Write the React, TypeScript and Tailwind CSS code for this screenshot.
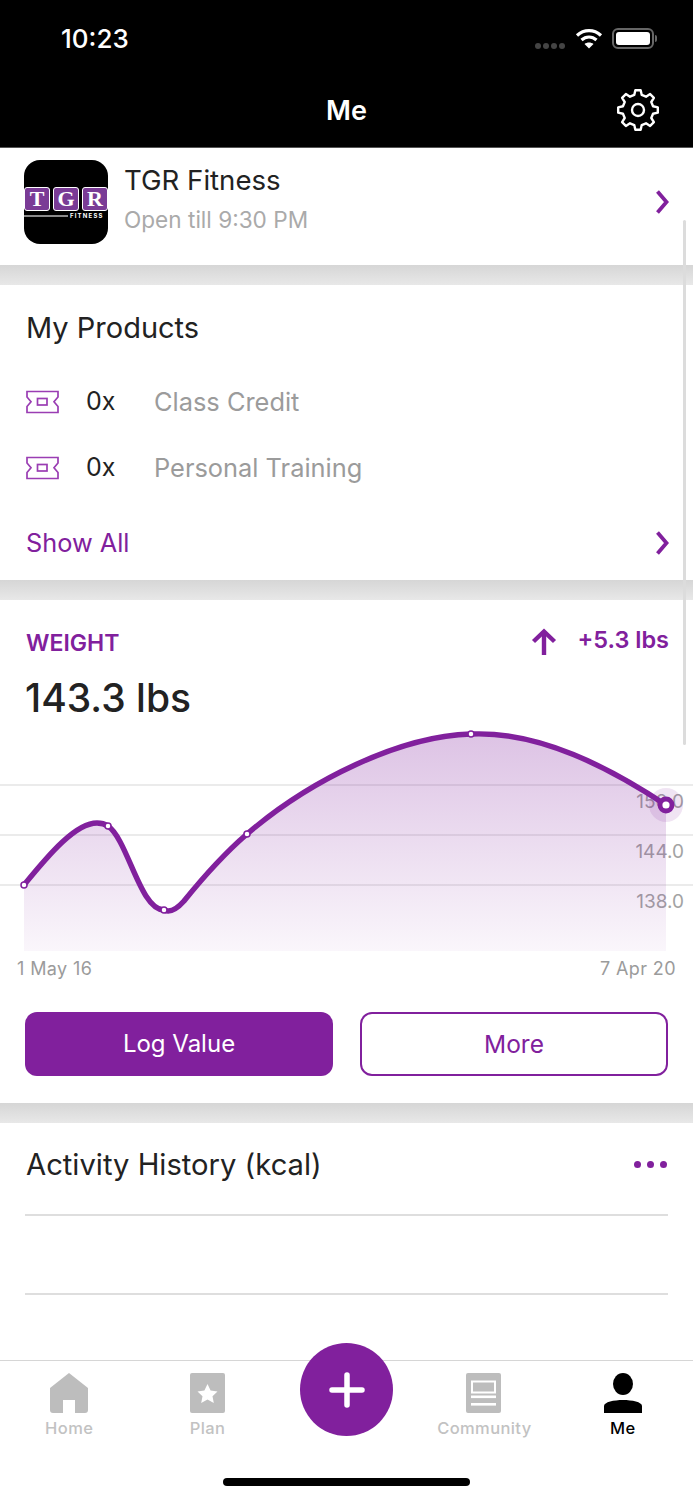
import React from "react";

const P = "#81209d";

function gearPath() {
  const cx = 22, cy = 22, n = 8;
  const pts: string[] = [];
  const ro = 20, ri = 15.5;
  for (let i = 0; i < n; i++) {
    const a = (i * 2 * Math.PI) / n - Math.PI / 2;
    const w = Math.PI / n;
    const list: [number, number][] = [
      [ri, a - w * 0.62],
      [ro, a - w * 0.34],
      [ro, a + w * 0.34],
      [ri, a + w * 0.62],
    ];
    for (const [r, t] of list) {
      pts.push(`${(cx + r * Math.cos(t)).toFixed(2)} ${(cy + r * Math.sin(t)).toFixed(2)}`);
    }
  }
  return "M" + pts.join("L") + "Z";
}

function Chevron() {
  return (
    <svg width="15" height="24" viewBox="0 0 15 24" fill="none" stroke={P} strokeWidth="3.8">
      <path d="M2.5 1.5 L11.5 12 L2.5 22.5" />
    </svg>
  );
}

function Ticket() {
  return (
    <svg width="33" height="24" viewBox="0 0 33 24" fill="none" stroke="#9a3db3" strokeWidth="1.7" className="shrink-0">
      <path d="M1 1.5 H32 V7 L28 11.8 L32 16.5 V22.5 H1 V16.5 L5 11.8 L1 7 Z" />
      <rect x="11.5" y="8.5" width="9.5" height="6.5" />
    </svg>
  );
}

function Divider() {
  return <div className="h-5 shrink-0 bg-gradient-to-b from-[#d6d6d6] to-[#e8e8e8]" />;
}

function ProductRow({ name }: { name: string }) {
  return (
    <div className="flex items-center h-[66px] pl-[26px]">
      <Ticket />
      <span className="ml-[27px] w-[68px] text-[25px] text-[#222]">0x</span>
      <span className="text-[25.4px] text-[#9b9b9b]">{name}</span>
    </div>
  );
}

function Chart() {
  const line =
    "M24 885 C50 853 76 823 97 823 C101 823 105 824 108 826 C128 840 140 910 164 910 C170 913 176 910 184 901 C205 875 225 853 247 834 C310 780 400 736 471 734 C540 731 610 768 666 805";
  const fill = line + " V951 H24 Z";
  return (
    <svg width="693" height="260" viewBox="0 720 693 260" className="block" style={{ fontFamily: "Inter, sans-serif" }}>
      <defs>
        <linearGradient id="chartFill" x1="0" y1="734" x2="0" y2="951" gradientUnits="userSpaceOnUse">
          <stop offset="0" stopColor={P} stopOpacity="0.27" />
          <stop offset="1" stopColor={P} stopOpacity="0.04" />
        </linearGradient>
      </defs>
      {[785, 835, 885].map((y) => (
        <line key={y} x1="0" x2="693" y1={y} y2={y} stroke="#e4e4e4" strokeWidth="1.5" />
      ))}
      <g fontSize="19" fill="#a3a3a3" textAnchor="end">
        <text x="684" y="808">150.0</text>
        <text x="684" y="858">144.0</text>
        <text x="684" y="908">138.0</text>
      </g>
      <path d={fill} fill="url(#chartFill)" />
      <path d={line} fill="none" stroke={P} strokeWidth="5.4" strokeLinecap="round" />
      {[
        [24, 885],
        [108, 826],
        [164, 910],
        [247, 834],
        [471, 734],
      ].map(([x, y]) => (
        <circle key={x} cx={x} cy={y} r="3" fill="#fff" stroke={P} strokeWidth="1.5" />
      ))}
      <circle cx="666" cy="805" r="17" fill={P} fillOpacity="0.12" />
      <circle cx="666" cy="805" r="6" fill="#fff" stroke={P} strokeWidth="4.8" />
      <g fontSize="18" fill="#9b9b9b" letterSpacing="0.4">
        <text x="17" y="975">1 May 16</text>
        <text x="676" y="975" textAnchor="end">7 Apr 20</text>
      </g>
    </svg>
  );
}

function Logo() {
  const Tile = ({ c }: { c: string }) => (
    <div className="w-[26px] h-[24px] bg-[#7a3b96] border border-white rounded-[3px] flex items-center justify-center text-white text-[22px] font-bold leading-none" style={{ fontFamily: '"Liberation Serif", serif' }}>
      {c}
    </div>
  );
  return (
    <div className="w-[84px] h-[84px] bg-black rounded-[16px] shrink-0 flex flex-col justify-center overflow-hidden">
      <div className="flex justify-between mt-[1px]">
        <Tile c="T" />
        <Tile c="G" />
        <Tile c="R" />
      </div>
      <div className="flex items-center mt-[2px]">
        <div className="w-[44px] h-[2px] bg-[#8a8a8a]" />
        <span className="ml-[2px] text-[6px] font-bold tracking-[1.2px] text-white leading-none">FITNESS</span>
      </div>
    </div>
  );
}

function TabLabel({ children, active }: { children: string; active?: boolean }) {
  return (
    <span className={`mt-[5px] text-[16.5px] leading-[20px] font-medium tracking-[0.4px] ${active ? "text-black" : "text-[#c2c2c2]"}`}>
      {children}
    </span>
  );
}

export default function App() {
  return (
    <div className="relative w-[693px] h-[1500px] overflow-hidden bg-white flex flex-col" style={{ fontFamily: "Inter, sans-serif" }}>
      {/* Black header */}
      <div className="h-[148px] shrink-0 bg-black text-white border-b border-[#555] flex flex-col">
        <div className="h-[76px] flex items-center justify-between pl-[61px] pr-[36px] pt-[1px]">
          <span className="text-[26px] font-medium">10:23</span>
          <div className="flex items-center">
            <div className="flex gap-[2px] mt-[14px] mr-[10px]">
              {[0, 1, 2, 3].map((i) => (
                <div key={i} className="w-[6px] h-[6px] rounded-full bg-[#444]" />
              ))}
            </div>
            <svg width="28" height="21" viewBox="0 0 28 21" fill="none" stroke="#fff" strokeWidth="3.2" className="mr-[9px]">
              <path d="M2 7.5 C9 1 19 1 26 7.5" />
              <path d="M6.5 12 C11 8 17 8 21.5 12" />
              <path d="M14 20.5 L9.5 16 C12 14 16 14 18.5 16 Z" fill="#fff" stroke="none" />
            </svg>
            <div className="w-[42px] h-[21px] rounded-[6px] border-2 border-[#666] p-[2px]">
              <div className="w-full h-full rounded-[3px] bg-white" />
            </div>
            <div className="w-[2px] h-[7px] bg-[#666] rounded-r-sm ml-[1px]" />
          </div>
        </div>
        <div className="relative flex-1 flex items-start justify-center">
          <span className="text-[27px] font-semibold mt-[15px] leading-[40px]">Me</span>
          <svg width="44" height="44" viewBox="0 0 44 44" fill="none" stroke="#fff" strokeWidth="2.4" strokeLinejoin="round" className="absolute right-[33px] top-[12px]">
            <path d={gearPath()} />
            <circle cx="22" cy="22" r="6" />
          </svg>
        </div>
      </div>

      {/* Scroll content */}
      <div className="relative flex-1 overflow-hidden">
        <div className="h-[117px] flex items-start pl-6 pr-[23px] pt-[12px]">
          <Logo />
          <div className="ml-[17px] flex-1 mt-[1px]">
            <div className="text-[27.6px] text-[#222] leading-[38px] ml-[-1px]">TGR Fitness</div>
            <div className="text-[22.6px] text-[#aaa] leading-[34px] mt-[4px] ml-[-1px]">Open till 9:30 PM</div>
          </div>
          <div className="mt-[30px]"><Chevron /></div>
        </div>
        <Divider />

        <div className="h-[295px] pt-[23px]">
          <div className="text-[29px] text-[#222] pl-[26px] leading-[40px]">My Products</div>
          <div className="mt-[21px]">
            <ProductRow name="Class Credit" />
            <ProductRow name="Personal Training" />
          </div>
          <div className="flex items-center justify-between pl-[26px] pr-[23px] mt-[22px]">
            <span className="text-[25.3px] leading-[40px]" style={{ color: P }}>Show All</span>
            <Chevron />
          </div>
        </div>
        <Divider />

        <div className="h-[503px] flex flex-col">
          <div className="flex items-start justify-between pl-[26px] pr-[24px] pt-[25px] h-[73px]" style={{ color: P }}>
            <span className="text-[23px] font-semibold leading-[36px]">WEIGHT</span>
            <div className="flex items-center mt-[-3px]">
              <svg width="26" height="28" viewBox="0 0 26 28" fill="none" stroke={P} strokeWidth="4.4" className="mr-[20px] mt-[3px]">
                <path d="M13 27 V4" />
                <path d="M2.5 13.5 L13 3.5 L23.5 13.5" />
              </svg>
              <span className="text-[23.5px] font-semibold leading-[36px]">+5.3 lbs</span>
            </div>
          </div>
          <div className="text-[39px] text-[#222] font-medium pl-[25px] leading-[50px]">143.3 lbs</div>
          <div className="mt-[-3px] h-[260px]">
            <Chart />
          </div>
          <div className="flex gap-[27px] px-[25px] mt-[32px]">
            <button className="w-[308px] h-[64px] rounded-[12px] text-white text-[24px]" style={{ background: P }}>
              Log Value
            </button>
            <button className="w-[308px] h-[64px] rounded-[12px] bg-white border-2 text-[24.5px]" style={{ borderColor: P, color: P }}>
              More
            </button>
          </div>
        </div>
        <Divider />

        <div className="px-[25px]">
          <div className="h-[93px] border-b-2 border-[#dedede] flex items-start justify-between pt-[21px]">
            <span className="text-[29.2px] text-[#222] leading-[42px] ml-[1px]">Activity History (kcal)</span>
            <div className="flex gap-[6px] mt-[17px] mr-[1px]">
              {[0, 1, 2].map((i) => (
                <div key={i} className="w-[7px] h-[7px] rounded-full" style={{ background: P }} />
              ))}
            </div>
          </div>
          <div className="h-[79px] border-b-2 border-[#dedede]" />
        </div>

        {/* Scroll indicator */}
        <div className="absolute right-[7px] top-[72px] w-[3px] h-[525px] rounded-full bg-[#dcdcdc]" />
      </div>

      {/* Tab bar */}
      <div className="relative h-[140px] shrink-0 bg-white border-t border-[#d6d6d6]">
        <div className="grid grid-cols-5 h-[80px] w-[692px] pt-[12px]">
          <div className="flex flex-col items-center">
            <svg width="38" height="40" viewBox="0 0 38 40" fill="#bdbdbd">
              <path d="M19 0 L38 15 V37 Q38 40 35 40 H25 V27 H13 V40 H3 Q0 40 0 37 V15 Z" />
            </svg>
            <TabLabel>Home</TabLabel>
          </div>
          <div className="flex flex-col items-center">
            <svg width="36" height="40" viewBox="0 0 36 40">
              <rect width="35" height="40" rx="2" fill="#bdbdbd" />
              <path d="M17.5 11 L20.6 17.6 L27.5 18.4 L22.5 23.2 L23.8 30 L17.5 26.6 L11.2 30 L12.5 23.2 L7.5 18.4 L14.4 17.6 Z" fill="#fff" />
            </svg>
            <TabLabel>Plan</TabLabel>
          </div>
          <div />
          <div className="flex flex-col items-center">
            <svg width="36" height="40" viewBox="0 0 36 40">
              <rect width="35" height="40" rx="2" fill="#bdbdbd" />
              <rect x="6" y="8.5" width="23" height="11" fill="none" stroke="#fff" strokeWidth="2" />
              <rect x="5" y="22.5" width="25" height="2.6" fill="#fff" />
              <rect x="5" y="30" width="25" height="2.6" fill="#fff" />
            </svg>
            <TabLabel>Community</TabLabel>
          </div>
          <div className="flex flex-col items-center">
            <svg width="38" height="40" viewBox="0 0 38 40" fill="#000">
              <ellipse cx="19" cy="11" rx="10" ry="11" />
              <path d="M0 40 V33 C0 29 10 27 19 27 C28 27 38 29 38 33 V40 Z" />
            </svg>
            <TabLabel active>Me</TabLabel>
          </div>
        </div>

        {/* FAB */}
        <div className="absolute left-[300px] top-[-18px] w-[93px] h-[93px] rounded-full flex items-center justify-center" style={{ background: P }}>
          <svg width="36" height="36" viewBox="0 0 36 36" stroke="#fff" strokeWidth="5.5" strokeLinecap="round">
            <path d="M18 3 V33 M3 18 H33" />
          </svg>
        </div>

        {/* Home indicator */}
        <div className="absolute left-[223px] top-[117px] w-[247px] h-[8px] rounded-full bg-black" />
      </div>
    </div>
  );
}
